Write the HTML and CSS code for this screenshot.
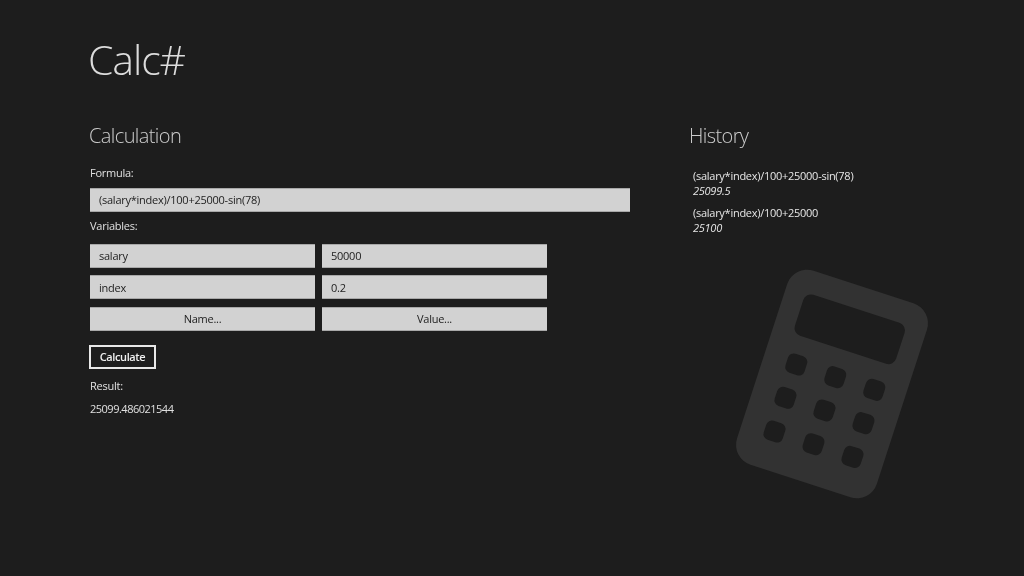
FILE: index.html
```html
<!DOCTYPE html>
<html lang="en">
<head>
<meta charset="utf-8">
<title>Calc#</title>
<link rel="stylesheet" href="styles.css">
</head>
<body>
<div class="page">
  <h1 class="title">Calc#</h1>
  <div class="columns">
    <main class="calc">
      <h2 class="heading">Calculation</h2>
      <div class="label formula-label">Formula:</div>
      <div class="field">(salary*index)/100+25000-sin(78)</div>
      <div class="label vars-label">Variables:</div>
      <div class="vars">
        <div class="field">salary</div>
        <div class="field">50000</div>
        <div class="field">index</div>
        <div class="field">0.2</div>
        <button class="field picker">Name...</button>
        <button class="field picker">Value...</button>
      </div>
      <button class="calculate">Calculate</button>
      <div class="label result-label">Result:</div>
      <div class="label result">25099.486021544</div>
    </main>
    <aside class="history">
      <h2 class="heading">History</h2>
      <ul class="entries">
        <li class="entry"><div>(salary*index)/100+25000-sin(78)</div><div class="value">25099.5</div></li>
        <li class="entry"><div>(salary*index)/100+25000</div><div class="value">25100</div></li>
      </ul>
    </aside>
  </div>
</div>
<svg class="watermark" width="240" height="260" viewBox="-120 -130 240 260" aria-hidden="true">
  <g transform="rotate(18)">
    <rect class="wm-body" x="-73.5" y="-102" width="147" height="204" rx="21"/>
    <rect class="wm-hole" x="-53.3" y="-79" width="106.5" height="43" rx="8"/>
    <rect class="wm-hole" x="-50" y="-17.5" width="20" height="20" rx="6"/>
    <rect class="wm-hole" x="-9" y="-17.5" width="20" height="20" rx="6"/>
    <rect class="wm-hole" x="32" y="-17.5" width="20" height="20" rx="6"/>
    <rect class="wm-hole" x="-50" y="17.5" width="20" height="20" rx="6"/>
    <rect class="wm-hole" x="-9" y="17.5" width="20" height="20" rx="6"/>
    <rect class="wm-hole" x="32" y="17.5" width="20" height="20" rx="6"/>
    <rect class="wm-hole" x="-50" y="53" width="20" height="20" rx="6"/>
    <rect class="wm-hole" x="-9" y="53" width="20" height="20" rx="6"/>
    <rect class="wm-hole" x="32" y="53" width="20" height="20" rx="6"/>
  </g>
</svg>
</body>
</html>
```
FILE: styles.css
```css
html, body {
  margin: 0;
  height: 100%;
  overflow: hidden;
  background: #1d1d1d;
}
body {
  font-family: "Open Sans", "Liberation Sans", sans-serif;
  color: #e0e0e0;
  font-size: 11px;
}
.page {
  padding: 34px 0 0 89px;
  will-change: transform;
}
.title {
  margin: 0 0 0 -1px;
  font-size: 41px;
  line-height: 50px;
  font-weight: 300;
  color: #dcdcdc;
  letter-spacing: -1.1px;
}
.columns {
  display: flex;
  margin-top: 39px;
}
.calc {
  width: 600px;
}
.heading {
  margin: 0;
  font-size: 20px;
  line-height: 26px;
  font-weight: 300;
  color: #cccccc;
  letter-spacing: -0.6px;
}
.label {
  line-height: 16px;
  letter-spacing: -0.25px;
}
.formula-label { margin: 16px 0 0 1px; }
.vars-label { margin: 6px 0 0 1px; }
.field {
  display: flex;
  align-items: center;
  box-sizing: border-box;
  height: 24px;
  margin: 6.5px 0 0 1px;
  padding: 0 9px;
  width: 540px;
  background: #d2d2d2;
  border: 0;
  border-top: 1px solid #a8a8a8;
  border-bottom: 1px solid #a8a8a8;
  color: #222;
  font: inherit;
  letter-spacing: -0.25px;
}
.vars {
  display: grid;
  grid-template-columns: 225px 225px;
  column-gap: 7px;
  row-gap: 7.5px;
  margin: 10px 0 0 1px;
}
.vars .field {
  width: auto;
  margin: 0;
}
.picker {
  justify-content: center;
}
.calculate {
  display: block;
  box-sizing: border-box;
  width: 67px;
  height: 24px;
  margin-top: 14px;
  padding: 0;
  background: transparent;
  border: 2px solid #e8e8e8;
  color: #f0f0f0;
  font: inherit;
  font-weight: 600;
  letter-spacing: -0.4px;
}
.result-label { margin: 9px 0 0 1px; }
.result { margin: 7px 0 0 1px; letter-spacing: -0.5px; }
.entries {
  list-style: none;
  margin: 19px 0 0 4px;
  padding: 0;
  letter-spacing: -0.27px;
  color: #e6e6e6;
}
.entry {
  line-height: 15px;
  margin-bottom: 7px;
}
.value {
  font-style: italic;
}
.watermark {
  position: absolute;
  left: 712px;
  top: 254px;
}
.wm-body { fill: #323232; }
.wm-hole { fill: #1d1d1d; }
```
